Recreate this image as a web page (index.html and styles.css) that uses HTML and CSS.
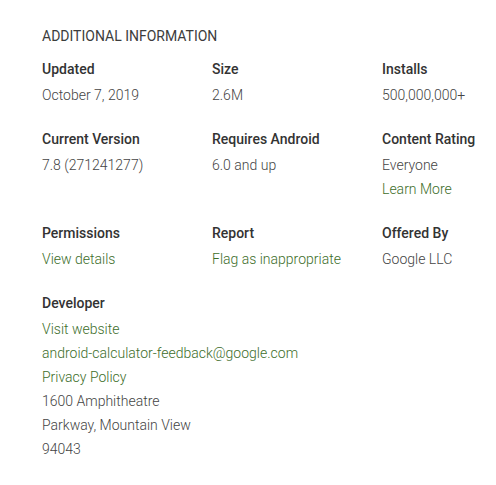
FILE: index.html
```html
<!DOCTYPE html>
<html>
<head>
<meta charset="utf-8">
<link rel="stylesheet" href="styles.css">
</head>
<body>
<div class="panel">
  <h2 class="title">ADDITIONAL INFORMATION</h2>
  <div class="grid">
    <div class="item"><div class="label">Updated</div><div class="value">October 7, 2019</div></div>
    <div class="item"><div class="label">Size</div><div class="value">2.6M</div></div>
    <div class="item"><div class="label">Installs</div><div class="value">500,000,000+</div></div>

    <div class="item"><div class="label">Current Version</div><div class="value">7.8 (271241277)</div></div>
    <div class="item"><div class="label">Requires Android</div><div class="value">6.0 and up</div></div>
    <div class="item"><div class="label">Content Rating</div><div class="value">Everyone</div><div class="value link">Learn More</div></div>

    <div class="item"><div class="label">Permissions</div><div class="value link">View details</div></div>
    <div class="item"><div class="label">Report</div><div class="value link">Flag as inappropriate</div></div>
    <div class="item"><div class="label">Offered By</div><div class="value">Google LLC</div></div>

    <div class="item wide"><div class="label">Developer</div>
      <div class="value link">Visit website</div>
      <div class="value link">android-calculator-feedback@google.com</div>
      <div class="value link">Privacy Policy</div>
      <div class="value">1600 Amphitheatre</div>
      <div class="value">Parkway, Mountain View</div>
      <div class="value">94043</div>
    </div>
  </div>
</div>
</body>
</html>
```

FILE: styles.css
```css
html, body {
  margin: 0;
  padding: 0;
  background: #fff;
}
body {
  font-family: Roboto, "Liberation Sans", sans-serif;
  font-size: 14px;
  color: #333;
}
.panel {
  padding: 24px 0 0 42px;
}
.title {
  margin: 0 0 9px;
  font-size: 14px;
  font-weight: 400;
  line-height: 24px;
  color: #3c3c3c;
}
.grid {
  display: grid;
  grid-template-columns: 170px 170px minmax(0, 1fr);
  row-gap: 20px;
}
.item {
  white-space: nowrap;
}
.item.wide {
  grid-column: 1 / span 3;
}
.label {
  font-weight: 500;
  line-height: 24px;
  margin-bottom: 2px;
  color: #333;
}
.value {
  font-weight: 300;
  line-height: 24px;
  color: #444;
}
.value.link {
  color: #3d6e2a;
}
```
